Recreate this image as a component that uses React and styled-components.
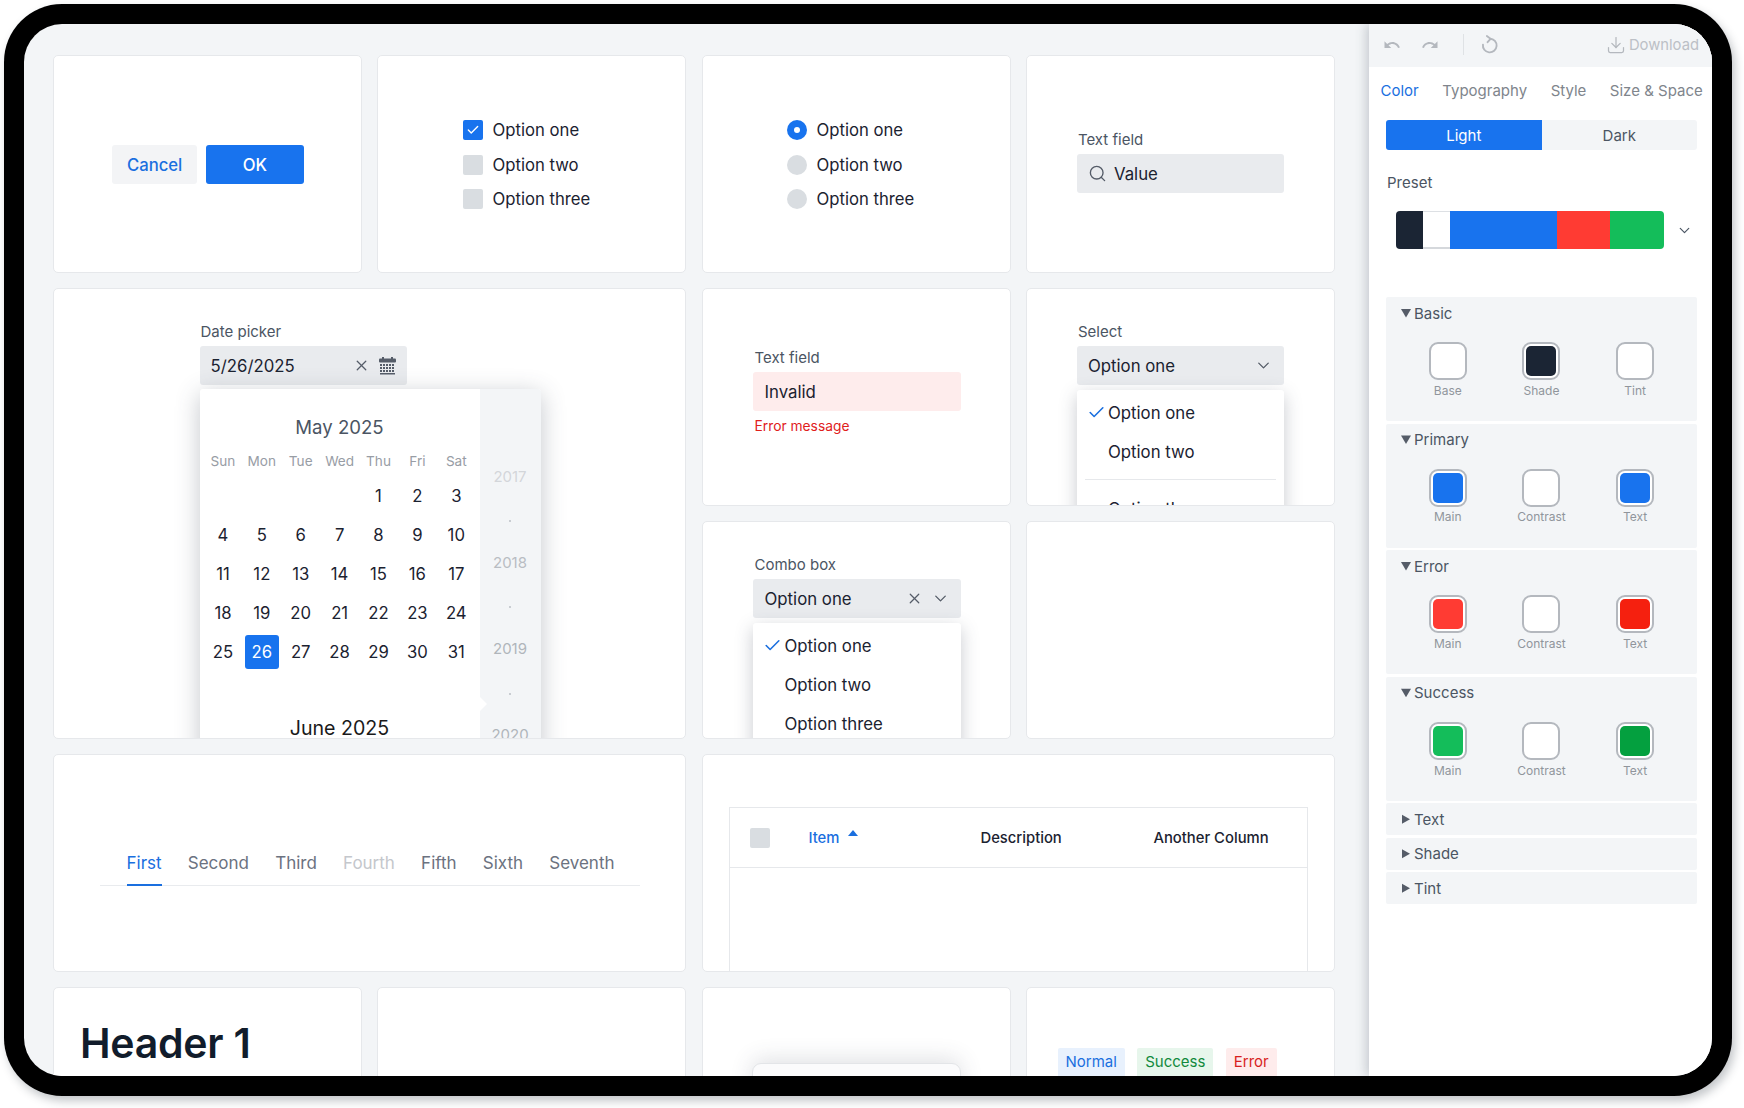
import React from "react";
import styled, { createGlobalStyle } from "styled-components";
import { Check, ChevronDown, Download, Search, X } from "lucide-react";
import { MdUndo, MdRedo } from "react-icons/md";

const blue = "#1873ee";
const ink = "#1b2230";
const slate = "#4b5563";

const GlobalStyle = createGlobalStyle`
  html, body { margin: 0; padding: 0; background: #fff; }
  body { font-family: Inter, "Liberation Sans", sans-serif; color: ${ink}; -webkit-font-smoothing: antialiased; }
  * { box-sizing: border-box; }
`;

const Frame = styled.div`
  width: 1728px;
  height: 1092px;
  margin: 4px 12px 12px 4px;
  padding: 20px;
  background: #000;
  border-radius: 58px;
  box-shadow: 3px 5px 10px rgba(40, 50, 60, 0.28);
`;

const Screen = styled.div`
  width: 1688px;
  height: 1052px;
  display: flex;
  border-radius: 38px;
  overflow: hidden;
  background: #f3f5f7;
`;

const Main = styled.main`
  flex: 1;
  min-width: 0;
  overflow: hidden;
  padding: 31.3px 0 0 29px;
`;

const Grid = styled.div`
  display: grid;
  grid-template-columns: repeat(4, 308.8px);
  grid-auto-rows: 217.3px;
  gap: 15.7px;
`;

const Card = styled.section`
  grid-column: span ${(p) => p.$cols || 1};
  grid-row: span ${(p) => p.$rows || 1};
  overflow: hidden;
  background: #fff;
  border: 1px solid #e6e8eb;
  border-radius: 5px;
  padding: ${(p) => p.$pad || "0"};
`;

const ButtonCard = styled(Card)`
  display: flex;
  align-items: center;
  justify-content: center;
  gap: 8.5px;
  padding: 2px 0 0 1px;
`;

const Button = styled.button`
  height: 39px;
  width: ${(p) => (p.$primary ? "98px" : "85.5px")};
  border: 0;
  border-radius: 3px;
  font: 500 16.7px Inter, sans-serif;
  color: ${(p) => (p.$primary ? "#fff" : "#1a6fdf")};
  background: ${(p) => (p.$primary ? blue : "#f3f4f6")};
`;

const OptionList = styled.div`
  display: flex;
  flex-direction: column;
  gap: 14.5px;
`;

const OptionRow = styled.div`
  display: flex;
  align-items: center;
  gap: 9.5px;
  height: 20px;
  font-size: 16.7px;
`;

const Box = styled.span`
  width: 20px;
  height: 20px;
  flex: none;
  display: grid;
  place-items: center;
  border-radius: ${(p) => (p.$round ? "50%" : "2px")};
  background: ${(p) => (p.$on ? blue : "#d9dde1")};
  color: #fff;
`;

const Dot = styled.span`
  width: 6px;
  height: 6px;
  border-radius: 50%;
  background: #fff;
`;

const FieldLabel = styled.div`
  height: 18px;
  margin: 0 0 5px 1px;
  font-size: 15px;
  line-height: 18px;
  color: ${slate};
`;

const Field = styled.div`
  width: 207.5px;
  height: 39px;
  display: flex;
  align-items: center;
  padding: 0 11px;
  border-radius: 3px;
  font-size: 16.8px;
  background: ${(p) => (p.$error ? "#feecec" : "#e9ebee")};
  svg { flex: none; color: #555c68; }
`;

const Grow = styled.span`
  flex: 1;
`;

const FieldValue = styled.span`
  margin-left: 7px;
`;

const IconGap = styled.span`
  width: ${(p) => p.$w}px;
`;

const ErrorText = styled.div`
  margin: 6px 0 0 1px;
  font-size: 13.8px;
  line-height: 18px;
  color: #e0201c;
`;

const Menu = styled.div`
  width: 207.5px;
  height: 260px;
  margin-top: 5px;
  padding: 3px 0;
  background: #fff;
  border-radius: 3px;
  box-shadow: 0 5px 18px rgba(60, 70, 85, 0.28);
`;

const MenuItem = styled.div`
  height: 39px;
  display: flex;
  align-items: center;
  padding-left: 31px;
  position: relative;
  font-size: 16.8px;
  svg { position: absolute; left: 10px; color: #1a6fdf; }
`;

const MenuDivider = styled.div`
  height: 1px;
  margin: 8px 8px 9px;
  background: #e6e8eb;
`;

const Calendar = styled.div`
  width: 341px;
  height: 500px;
  margin-top: 4px;
  display: flex;
  background: #fff;
  border-radius: 3px;
  box-shadow: 0 5px 24px rgba(60, 70, 85, 0.3);
`;

const MonthPane = styled.div`
  width: 280px;
  padding: 24px 4px 0;
`;

const MonthTitle = styled.div`
  height: 28px;
  margin-bottom: 10px;
  font-size: ${(p) => (p.$next ? "19.6px" : "18.6px")};
  line-height: 28px;
  text-align: center;
  color: ${(p) => (p.$next ? "#1a1a1a" : slate)};
`;

const Weekdays = styled.div`
  display: grid;
  grid-template-columns: repeat(7, 38.9px);
  height: 20px;
  margin-bottom: 5.5px;
  font-size: 13.6px;
  line-height: 20px;
  text-align: center;
  color: #989da5;
`;

const Days = styled.div`
  display: grid;
  grid-template-columns: repeat(7, 38.9px);
  grid-auto-rows: 39px;
  margin-bottom: 42.5px;
`;

const Day = styled.div`
  display: grid;
  place-items: center;
  font-size: 16.7px;
`;

const DayMark = styled.span`
  width: 34px;
  height: 34px;
  display: grid;
  place-items: center;
  border-radius: 3px;
  background: ${(p) => (p.$on ? blue : "transparent")};
  color: ${(p) => (p.$on ? "#fff" : ink)};
`;

const YearRail = styled.div`
  flex: 1;
  position: relative;
  display: flex;
  flex-direction: column;
  align-items: center;
  padding-top: 76.5px;
  background: #f3f5f7;
  border-radius: 0 3px 3px 0;
  &::before {
    content: "";
    position: absolute;
    left: 0;
    top: 308px;
    border: 7px solid transparent;
    border-left-color: #fff;
    border-right-width: 0;
  }
`;

const Year = styled.div`
  height: 22px;
  font-size: 15px;
  line-height: 22px;
  color: ${(p) => p.$tone};
`;

const YearDot = styled.div`
  width: 2px;
  height: 2px;
  margin: 32.5px 0 29.7px;
  background: #c9cdd2;
`;

const TabRow = styled.div`
  display: flex;
  gap: 26.2px;
  padding-left: 27px;
  border-bottom: 1px solid #e9ebee;
`;

const Tab = styled.div`
  height: 34px;
  margin-bottom: -1px;
  font-size: 17px;
  line-height: 22px;
  color: ${(p) => (p.$active ? "#1a6fdf" : p.$disabled ? "#c4c7cc" : "#6b7280")};
  border-bottom: 2px solid ${(p) => (p.$active ? "#1a6fdf" : "transparent")};
`;

const Table = styled.div`
  height: 240px;
  border: 1px solid #e6e8eb;
`;

const TableHead = styled.div`
  height: 60px;
  display: flex;
  align-items: center;
  padding-left: 20px;
  border-bottom: 1px solid #e6e8eb;
  font-size: 14.8px;
  font-weight: 500;
`;

const HeadCell = styled.div`
  width: ${(p) => p.$w};
  display: flex;
  align-items: center;
  gap: 9px;
  color: ${(p) => (p.$sorted ? "#1a6fdf" : ink)};
`;

const SortMark = styled.span`
  margin-top: -10px;
  border: 5px solid transparent;
  border-top-width: 0;
  border-bottom: 6px solid #1a6fdf;
`;

const Title = styled.h1`
  margin: 0;
  font-size: 41px;
  font-weight: 600;
  line-height: 48px;
  letter-spacing: -0.25px;
  color: #111c2b;
`;

const Panel = styled.div`
  width: 209.5px;
  height: 120px;
  margin: 0 auto;
  background: #fbfbfc;
  border: 1px solid #e3e5e8;
  border-radius: 9px;
  box-shadow: 0 -4px 22px rgba(60, 70, 85, 0.16);
`;

const TagRow = styled.div`
  display: flex;
  gap: 12.3px;
`;

const Tag = styled.span`
  height: 32px;
  padding: 3px 8px 0;
  border-radius: 2px;
  font-size: 15px;
  line-height: 21px;
  color: ${(p) => p.$fg};
  background: ${(p) => p.$bg};
`;

const Sidebar = styled.aside`
  width: 343px;
  flex: none;
  background: #fff;
  box-shadow: -3px 0 10px rgba(70, 80, 95, 0.26);
  position: relative;
`;

const Toolbar = styled.div`
  height: 43px;
  display: flex;
  align-items: center;
  padding: 0 13px 2px 14px;
  background: #f3f5f7;
  color: #b4b8be;
`;

const ToolSep = styled.span`
  width: 1px;
  height: 21px;
  margin: 0 17px 0 24px;
  background: #dfe2e5;
`;

const ToolGap = styled.span`
  width: ${(p) => p.$w};
`;

const DownloadLabel = styled.span`
  margin-left: 3px;
  font-size: 14.8px;
  color: #bcc0c6;
`;

const SideTabs = styled.div`
  height: 53px;
  display: flex;
  align-items: center;
  gap: 23.5px;
  padding: 0 0 6px 11.5px;
  font-size: 15px;
`;

const SideTab = styled.span`
  color: ${(p) => (p.$active ? "#1a6fdf" : "#80858c")};
`;

const Segment = styled.div`
  width: 311px;
  height: 30px;
  margin-left: 17px;
  display: flex;
  border-radius: 3px;
  overflow: hidden;
  background: #f3f5f7;
`;

const SegmentItem = styled.div`
  flex: 1;
  display: grid;
  place-items: center;
  font-size: 15px;
  color: ${(p) => (p.$on ? "#fff" : slate)};
  background: ${(p) => (p.$on ? blue : "transparent")};
`;

const SideLabel = styled.div`
  margin: 24px 0 19px 18px;
  font-size: 15px;
  line-height: 18px;
  color: ${slate};
`;

const PaletteRow = styled.div`
  display: flex;
  align-items: center;
  padding-left: 27px;
  margin-bottom: 48px;
  color: ${slate};
`;

const Palette = styled.div`
  width: 268px;
  height: 38px;
  margin-right: 12px;
  display: flex;
  border-radius: 4px;
  overflow: hidden;
`;

const PaletteChip = styled.span`
  width: ${(p) => p.$w}px;
  background: ${(p) => p.$c};
  ${(p) => p.$c === "#fff" && "box-shadow: inset 0 1px #dde0e4, inset 0 -2px #d5d8dc;"}
`;

const Sections = styled.div`
  width: 311px;
  margin-left: 17px;
  display: flex;
  flex-direction: column;
  gap: 2.55px;
`;

const Section = styled.div`
  height: ${(p) => (p.$open ? "124px" : "32px")};
  padding: 7px 15px 0;
  background: #f3f5f7;
  border-radius: 2px;
`;

const SectionHead = styled.div`
  display: flex;
  align-items: center;
  gap: 3px;
  height: 18px;
  font-size: 15px;
  color: ${slate};
`;

const Caret = styled.span`
  width: 10px;
  height: 10px;
  flex: none;
  background: #555c68;
  clip-path: ${(p) => (p.$open ? "polygon(0 10%, 100% 10%, 50% 95%)" : "polygon(10% 5%, 90% 50%, 10% 95%)")};
`;

const Swatches = styled.div`
  display: grid;
  grid-template-columns: repeat(3, 1fr);
  margin-top: 20.4px;
  justify-items: center;
`;

const Swatch = styled.div`
  display: flex;
  flex-direction: column;
  align-items: center;
  font-size: 12px;
  color: #90959c;
`;

const Chip = styled.span`
  width: 38px;
  height: 38px;
  margin-bottom: 2.5px;
  padding: 2px;
  border: 2px solid #b4b8be;
  border-radius: 9px;
  background: #fff;
  &::after {
    content: "";
    display: block;
    width: 100%;
    height: 100%;
    border-radius: 5px;
    background: ${(p) => p.$c};
  }
`;

function CalendarIcon() {
  const dots = [];
  for (let y = 7; y < 16; y += 3) {
    for (let x = 1; x < 16; x += 3) dots.push(<rect key={x + "-" + y} x={x} y={y} width="2" height="2" />);
  }
  return (
    <svg width="17" height="18" viewBox="0 0 17 18" fill="#555c68">
      <rect x="0" y="1.5" width="17" height="4" rx="1" />
      <rect x="3" y="0" width="2" height="3" />
      <rect x="12" y="0" width="2" height="3" />
      {dots}
      <rect x="1" y="16" width="15" height="1.5" />
    </svg>
  );
}

function ResetIcon() {
  return (
    <svg width="17" height="19" viewBox="0 0 16 18" fill="none" stroke="currentColor" strokeWidth="1.8" strokeLinecap="round">
      <path d="M8.5 3.5a6.5 6.5 0 1 1-6.7 5.6" />
      <path d="M5.5 1l3.5 2.6-2.8 3.2" />
    </svg>
  );
}

const swatchSections = [
  { name: "Basic", items: [["Base", "#fff"], ["Shade", "#1b2534"], ["Tint", "#fff"]] },
  { name: "Primary", items: [["Main", blue], ["Contrast", "#fff"], ["Text", blue]] },
  { name: "Error", items: [["Main", "#ff3b33"], ["Contrast", "#fff"], ["Text", "#f5200f"]] },
  { name: "Success", items: [["Main", "#14bd5a"], ["Contrast", "#fff"], ["Text", "#04a03f"]] },
];

const palette = [
  [27, "#1b2534"],
  [27, "#fff"],
  [107, blue],
  [53, "#ff3b33"],
  [54, "#14bd5a"],
];

const weekdays = ["Sun", "Mon", "Tue", "Wed", "Thu", "Fri", "Sat"];
const days = [...Array(4).fill(""), ...Array.from({ length: 31 }, (_, i) => i + 1)];

function Options({ round }) {
  return (
    <OptionList>
      {["Option one", "Option two", "Option three"].map((label, i) => (
        <OptionRow key={label}>
          <Box $round={round} $on={i === 0}>
            {i === 0 && (round ? <Dot /> : <Check size={14} strokeWidth={2.4} />)}
          </Box>
          {label}
        </OptionRow>
      ))}
    </OptionList>
  );
}

function OptionMenu({ divider }) {
  return (
    <Menu>
      <MenuItem>
        <Check size={19} strokeWidth={2} />
        Option one
      </MenuItem>
      <MenuItem>Option two</MenuItem>
      {divider && <MenuDivider />}
      <MenuItem>Option three</MenuItem>
    </Menu>
  );
}

export default function App() {
  return (
    <>
      <GlobalStyle />
      <Frame>
        <Screen>
          <Main>
            <Grid>
              <ButtonCard>
                <Button>Cancel</Button>
                <Button $primary>OK</Button>
              </ButtonCard>
              <Card $pad="64px 0 0 84.5px">
                <Options />
              </Card>
              <Card $pad="64px 0 0 84px">
                <Options round />
              </Card>
              <Card $pad="75px 0 0 49.5px">
                <FieldLabel>Text field</FieldLabel>
                <Field>
                  <Search size={19} strokeWidth={1.7} />
                  <FieldValue>Value</FieldValue>
                </Field>
              </Card>

              <Card $cols={2} $rows={2} $pad="34px 0 0 145.5px">
                <FieldLabel>Date picker</FieldLabel>
                <Field>
                  <Grow>5/26/2025</Grow>
                  <X size={17} strokeWidth={1.8} />
                  <IconGap $w={9} />
                  <CalendarIcon />
                </Field>
                <Calendar>
                  <MonthPane>
                    <MonthTitle>May 2025</MonthTitle>
                    <Weekdays>
                      {weekdays.map((d) => (
                        <span key={d}>{d}</span>
                      ))}
                    </Weekdays>
                    <Days>
                      {days.map((d, i) => (
                        <Day key={i}>
                          <DayMark $on={d === 26}>{d}</DayMark>
                        </Day>
                      ))}
                    </Days>
                    <MonthTitle $next>June 2025</MonthTitle>
                  </MonthPane>
                  <YearRail>
                    <Year $tone="#d3d6da">2017</Year>
                    <YearDot />
                    <Year $tone="#b9bdc3">2018</Year>
                    <YearDot />
                    <Year $tone="#b0b5bb">2019</Year>
                    <YearDot />
                    <Year $tone="#b0b5bb">2020</Year>
                  </YearRail>
                </Calendar>
              </Card>
              <Card $pad="60px 0 0 50.5px">
                <FieldLabel>Text field</FieldLabel>
                <Field $error>Invalid</Field>
                <ErrorText>Error message</ErrorText>
              </Card>
              <Card $pad="34px 0 0 49.5px">
                <FieldLabel>Select</FieldLabel>
                <Field>
                  <Grow>Option one</Grow>
                  <ChevronDown size={19} strokeWidth={1.7} />
                </Field>
                <OptionMenu divider />
              </Card>
              <Card $pad="34px 0 0 50.5px">
                <FieldLabel>Combo box</FieldLabel>
                <Field>
                  <Grow>Option one</Grow>
                  <X size={17} strokeWidth={1.7} />
                  <IconGap $w={8} />
                  <ChevronDown size={19} strokeWidth={1.7} />
                </Field>
                <OptionMenu />
              </Card>
              <Card />

              <Card $cols={2} $pad="97px 45px 0 45.5px">
                <TabRow>
                  <Tab $active>First</Tab>
                  <Tab>Second</Tab>
                  <Tab>Third</Tab>
                  <Tab $disabled>Fourth</Tab>
                  <Tab>Fifth</Tab>
                  <Tab>Sixth</Tab>
                  <Tab>Seventh</Tab>
                </TabRow>
              </Card>
              <Card $cols={2} $pad="52px 26px 0 26.5px">
                <Table>
                  <TableHead>
                    <Box />
                    <HeadCell $w="38px" />
                    <HeadCell $w="172px" $sorted>
                      Item
                      <SortMark />
                    </HeadCell>
                    <HeadCell $w="173px">Description</HeadCell>
                    <HeadCell>Another Column</HeadCell>
                  </TableHead>
                </Table>
              </Card>

              <Card $pad="31px 0 0 26px">
                <Title>Header 1</Title>
              </Card>
              <Card />
              <Card $pad="74.5px 0 0">
                <Panel />
              </Card>
              <Card $pad="59.7px 0 0 30.1px">
                <TagRow>
                  <Tag $fg="#1a6fdf" $bg="#e8f1fd">Normal</Tag>
                  <Tag $fg="#118a3c" $bg="#e7f6ec">Success</Tag>
                  <Tag $fg="#d81e1e" $bg="#feecec">Error</Tag>
                </TagRow>
              </Card>
            </Grid>
          </Main>

          <Sidebar>
            <Toolbar>
              <MdUndo size={18} />
              <ToolGap $w="20px" />
              <MdRedo size={18} />
              <ToolSep />
              <ResetIcon />
              <Grow />
              <Download size={20} strokeWidth={1.5} />
              <DownloadLabel>Download</DownloadLabel>
            </Toolbar>
            <SideTabs>
              <SideTab $active>Color</SideTab>
              <SideTab>Typography</SideTab>
              <SideTab>Style</SideTab>
              <SideTab>Size &amp; Space</SideTab>
            </SideTabs>
            <Segment>
              <SegmentItem $on>Light</SegmentItem>
              <SegmentItem>Dark</SegmentItem>
            </Segment>
            <SideLabel>Preset</SideLabel>
            <PaletteRow>
              <Palette>
                {palette.map(([w, c]) => (
                  <PaletteChip key={c} $w={w} $c={c} />
                ))}
              </Palette>
              <ChevronDown size={17} strokeWidth={1.7} />
            </PaletteRow>
            <Sections>
              {swatchSections.map((s) => (
                <Section $open key={s.name}>
                  <SectionHead>
                    <Caret $open />
                    {s.name}
                  </SectionHead>
                  <Swatches>
                    {s.items.map(([label, c]) => (
                      <Swatch key={label}>
                        <Chip $c={c} />
                        {label}
                      </Swatch>
                    ))}
                  </Swatches>
                </Section>
              ))}
              {["Text", "Shade", "Tint"].map((name) => (
                <Section key={name}>
                  <SectionHead>
                    <Caret />
                    {name}
                  </SectionHead>
                </Section>
              ))}
            </Sections>
          </Sidebar>
        </Screen>
      </Frame>
    </>
  );
}
